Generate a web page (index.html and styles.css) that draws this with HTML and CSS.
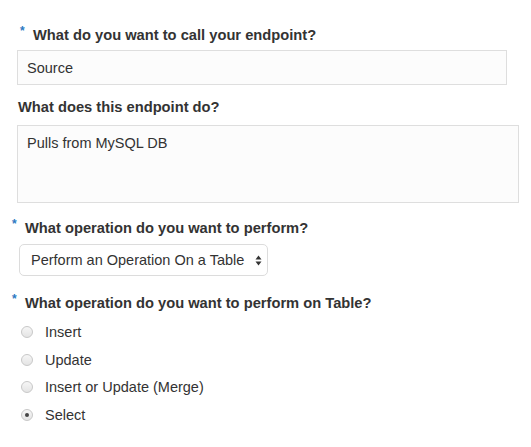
FILE: index.html
```html
<!DOCTYPE html>
<html>
<head>
<meta charset="utf-8">
<link rel="stylesheet" href="styles.css">
</head>
<body>
<div class="form">
  <div class="label l1"><span class="req">*</span>What do you want to call your endpoint?</div>
  <div class="input">Source</div>
  <div class="label l2">What does this endpoint do?</div>
  <div class="textarea">Pulls from MySQL DB</div>
  <div class="label l3"><span class="req">*</span>What operation do you want to perform?</div>
  <div class="select">
    <span>Perform an Operation On a Table</span>
    <svg class="arrows" width="7" height="11" viewBox="0 0 7 11"><path d="M3.5 0.5 L6.5 4.5 H0.5 Z" fill="#333"/><path d="M3.5 10.5 L6.5 6.5 H0.5 Z" fill="#333"/></svg>
  </div>
  <div class="label l4"><span class="req">*</span>What operation do you want to perform on Table?</div>
  <div class="radios">
    <div class="radio"><span class="circle"></span>Insert</div>
    <div class="radio"><span class="circle"></span>Update</div>
    <div class="radio"><span class="circle"></span>Insert or Update (Merge)</div>
    <div class="radio"><span class="circle checked"></span>Select</div>
  </div>
</div>
</body>
</html>
```
FILE: styles.css
```css
html, body {
  margin: 0;
  padding: 0;
  background: #ffffff;
}
body {
  font-family: "Liberation Sans", Arial, sans-serif;
  font-size: 14.5px;
  color: #333333;
}
.form {
  display: flex;
  flex-direction: column;
  align-items: flex-start;
  padding-top: 26px;
}
.label {
  font-weight: bold;
  font-size: 14.7px;
  line-height: 18px;
  height: 18px;
  color: #333333;
}
.req {
  color: #2b79c2;
  font-size: 12px;
  display: inline-block;
  width: 13px;
  vertical-align: top;
  line-height: 11px;
}
.l1 { margin-left: 20px; }
.l2 { margin-left: 18px; margin-top: 13px; }
.l3 { margin-left: 12px; margin-top: 16px; }
.l4 { margin-left: 12px; margin-top: 18px; }
.input {
  margin-top: 6px;
  margin-left: 17px;
  width: 490px;
  height: 35px;
  box-sizing: border-box;
  border: 1px solid #dedede;
  background: #fcfcfc;
  padding-left: 9px;
  display: flex;
  align-items: center;
  color: #333;
}
.textarea {
  margin-top: 9px;
  margin-left: 17px;
  width: 502px;
  height: 78px;
  box-sizing: border-box;
  border: 1px solid #dedede;
  background: #fcfcfc;
  padding: 8px 9px;
  line-height: 18px;
}
.select {
  margin-top: 7px;
  margin-left: 19px;
  width: 249px;
  height: 32px;
  box-sizing: border-box;
  border: 1px solid #dcdcdc;
  border-radius: 5px;
  background: #ffffff;
  padding-left: 11px;
  padding-right: 5px;
  display: flex;
  align-items: center;
  justify-content: space-between;
}
.arrows { display: block; }
.radios {
  margin-top: 6px;
  display: flex;
  flex-direction: column;
}
.radio {
  height: 27.7px;
  display: flex;
  align-items: center;
  padding-left: 21px;
}
.circle {
  width: 12px;
  height: 12px;
  box-sizing: border-box;
  border-radius: 50%;
  border: 1px solid #c8c8c8;
  background: linear-gradient(#f6f6f6, #e4e4e4);
  margin-right: 12px;
  display: flex;
  align-items: center;
  justify-content: center;
}
.circle.checked::after {
  content: "";
  width: 4px;
  height: 4px;
  border-radius: 50%;
  background: #444;
}
```
